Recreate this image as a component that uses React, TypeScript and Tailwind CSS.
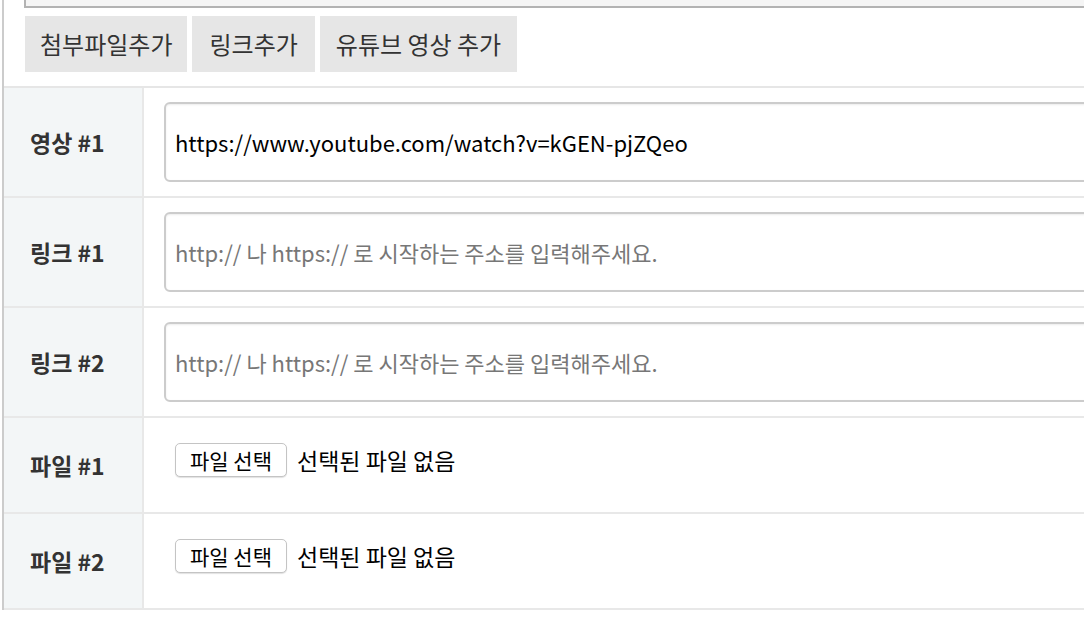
import React from 'react'

const font = { fontFamily: '"Noto Sans CJK KR", "Noto Sans", sans-serif' }

function LinkRow({ label, value, placeholder }: { label: string; value?: string; placeholder: string }) {
  return (
    <div className="flex border-b-2 border-[#e8e8e8]">
      <div className="flex w-[140px] shrink-0 items-center border-r-2 border-[#e8e8e8] bg-[#f3f6f7] pl-[26px] text-[23px] font-bold text-[#333]">
        {label}
      </div>
      <div className="flex-1 py-[14px] pl-[20px]">
        <input
          type="text"
          defaultValue={value}
          placeholder={placeholder}
          style={font}
          className="h-[80px] w-full rounded-[6px] border-2 border-[#cccccc] bg-white px-[9px] text-[22px] text-black shadow-[inset_0_1px_2px_rgba(0,0,0,0.08)] outline-none placeholder:text-[#777]"
        />
      </div>
    </div>
  )
}

function FileRow({ label }: { label: string }) {
  return (
    <div className="flex h-[96px] border-b-2 border-[#e8e8e8]">
      <div className="flex w-[140px] shrink-0 items-center border-r-2 border-[#e8e8e8] bg-[#f3f6f7] pl-[26px] text-[23px] font-bold text-[#333]">
        {label}
      </div>
      <div className="flex flex-1 items-center gap-[10px] pb-[10px] pl-[31px]">
        <button className="h-[34px] w-[112px] rounded-[5px] border border-[#c4c4c4] bg-white text-[21px] leading-none text-black shadow-[0_1px_1px_rgba(0,0,0,0.12)]">
          파일 선택
        </button>
        <span className="text-[23px] text-black">선택된 파일 없음</span>
      </div>
    </div>
  )
}

export default function App() {
  return (
    <div className="h-[632px] w-[1084px] overflow-hidden bg-white" style={font}>
      <div className="ml-[2px] w-[1130px] border-l-2 border-[#cccccc]">
        {/* bottom of the editor above */}
        <div className="ml-[20px] h-[8px] border-b-2 border-l-2 border-[#b3b3b3] bg-[#f5f5f5]" />

        {/* add buttons */}
        <div className="ml-[21px] mt-[8px] flex gap-[5px]">
          <button className="h-[56px] bg-[#e6e6e6] px-[15px] text-[24px] text-[#333]">첨부파일추가</button>
          <button className="h-[56px] bg-[#e6e6e6] px-[17px] text-[24px] text-[#333]">링크추가</button>
          <button className="h-[56px] bg-[#e6e6e6] px-[16px] text-[24px] text-[#333]">유튜브 영상 추가</button>
        </div>

        {/* attachments table */}
        <div className="mt-[14px] border-t-2 border-[#e6e6e6]">
          <LinkRow label="영상 #1" value="https://www.youtube.com/watch?v=kGEN-pjZQeo" placeholder="" />
          <LinkRow label="링크 #1" placeholder="http:// 나 https:// 로 시작하는 주소를 입력해주세요." />
          <LinkRow label="링크 #2" placeholder="http:// 나 https:// 로 시작하는 주소를 입력해주세요." />
          <FileRow label="파일 #1" />
          <FileRow label="파일 #2" />
        </div>
      </div>
    </div>
  )
}
